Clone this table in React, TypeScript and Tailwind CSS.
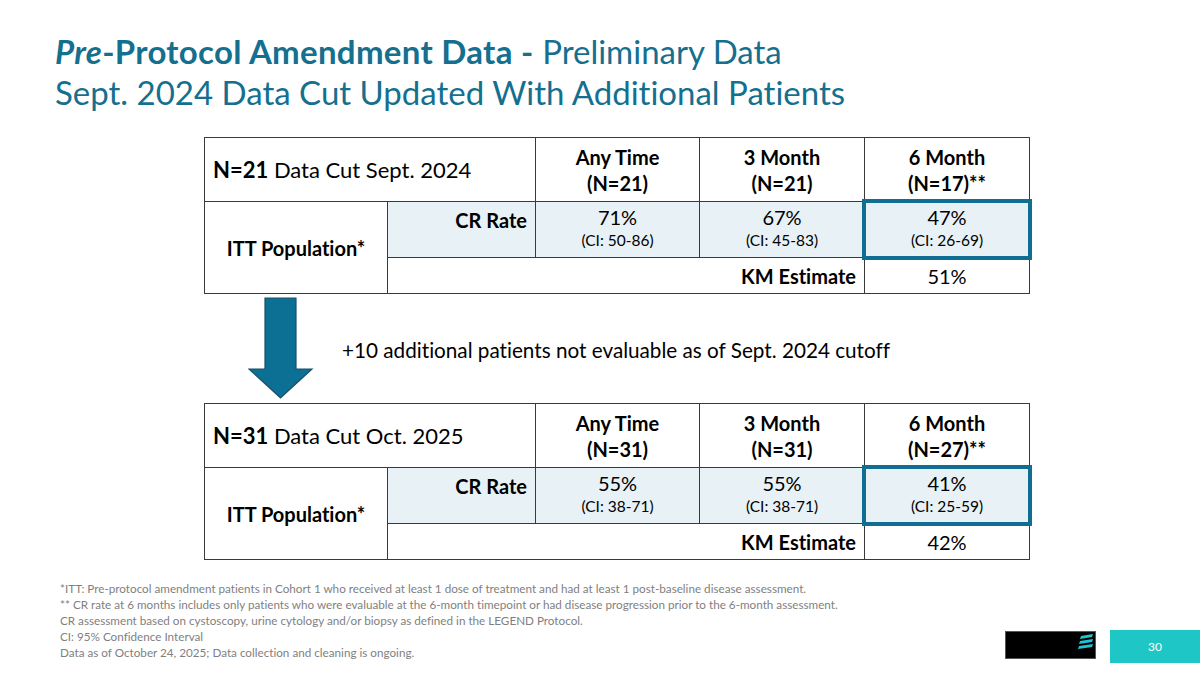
import React from "react";

const FONT = { fontFamily: "Lato, 'Open Sans', 'Noto Sans', sans-serif" };

interface CutData {
  n: string;
  label: string;
  anyN: string;
  m3N: string;
  m6N: string;
  rates: { value: string; ci: string }[];
  km: string;
}

const CUTS: CutData[] = [
  {
    n: "N=21",
    label: "Data Cut Sept. 2024",
    anyN: "(N=21)",
    m3N: "(N=21)",
    m6N: "(N=17)**",
    rates: [
      { value: "71%", ci: "(CI: 50-86)" },
      { value: "67%", ci: "(CI: 45-83)" },
      { value: "47%", ci: "(CI: 26-69)" },
    ],
    km: "51%",
  },
  {
    n: "N=31",
    label: "Data Cut Oct. 2025",
    anyN: "(N=31)",
    m3N: "(N=31)",
    m6N: "(N=27)**",
    rates: [
      { value: "55%", ci: "(CI: 38-71)" },
      { value: "55%", ci: "(CI: 38-71)" },
      { value: "41%", ci: "(CI: 25-59)" },
    ],
    km: "42%",
  },
];

const cell = "border border-[#3a3a3a]";

function CutTable({ d }: { d: CutData }) {
  return (
    <table className="ml-[204px] w-[825px] table-fixed border-collapse text-black">
      <colgroup>
        <col className="w-[183px]" />
        <col className="w-[148px]" />
        <col className="w-[164px]" />
        <col className="w-[165px]" />
        <col className="w-[165px]" />
      </colgroup>
      <tbody>
        <tr className="h-[64px]">
          <td colSpan={2} className={`${cell} pl-2 text-[22px]`}>
            <span className="font-bold">{d.n}</span> {d.label}
          </td>
          {[
            ["Any Time", d.anyN],
            ["3 Month", d.m3N],
            ["6 Month", d.m6N],
          ].map(([a, b]) => (
            <td
              key={a}
              className={`${cell} text-center text-[20px] font-bold leading-[26px]`}
            >
              {a}
              <br />
              {b}
            </td>
          ))}
        </tr>
        <tr className="h-[56px]">
          <td
            rowSpan={2}
            className={`${cell} text-center text-[20px] font-bold`}
          >
            ITT Population*
          </td>
          <td
            className={`${cell} bg-[#e8f1f6] pr-2 pt-[3px] text-right align-top text-[20px] font-bold`}
          >
            CR Rate
          </td>
          {d.rates.map((r, i) => (
            <td
              key={i}
              className={`${cell} relative bg-[#e8f1f6] pt-[3px] text-center align-top`}
            >
              <div className="text-[20px] leading-[24px]">{r.value}</div>
              <div className="text-[15.5px] leading-[22px]">{r.ci}</div>
              {i === 2 && (
                <div className="absolute -top-[3px] -left-[3px] -right-[3px] -bottom-[3px] border-[4px] border-[#0f6e92]" />
              )}
            </td>
          ))}
        </tr>
        <tr className="h-[36px]">
          <td
            colSpan={3}
            className={`${cell} pr-2 text-right text-[20px] font-bold`}
          >
            KM Estimate
          </td>
          <td className={`${cell} text-center text-[20px]`}>{d.km}</td>
        </tr>
      </tbody>
    </table>
  );
}

function DownArrow() {
  return (
    <svg width="66" height="102" viewBox="0 0 66 102" className="block">
      <path
        d="M17 1 H48 V72 H64 L32.5 101 L1 72 H17 Z"
        fill="#0c6f94"
        stroke="#1d4f66"
        strokeWidth="1.2"
      />
    </svg>
  );
}

function Logo() {
  return (
    <svg width="16" height="18" viewBox="0 0 16 18">
      <path d="M3 2 L15 0 L14 3 L2 5 Z" fill="#22c4d4" />
      <path d="M2 7 L15 5 L14 8 L1 10 Z" fill="#22c4d4" />
      <path d="M1 12 L15 10 L14 13 L0 15 Z" fill="#22c4d4" />
    </svg>
  );
}

export default function App() {
  return (
    <div
      className="relative h-[675px] w-[1200px] overflow-hidden bg-white [font-variant-ligatures:none]"
      style={FONT}
    >
      <div className="pl-[55px] pt-[31px] text-[33px] leading-[41px] text-[#156f8f]">
        <div>
          <span className="font-bold tracking-[0.3px]">
            <i>Pre</i>-Protocol Amendment Data -
          </span>{" "}
          Preliminary Data
        </div>
        <div>Sept. 2024 Data Cut Updated With Additional Patients</div>
      </div>

      <div className="mt-[24px]">
        <CutTable d={CUTS[0]} />
      </div>

      <div className="flex h-[109px] items-start">
        <div className="ml-[248px] mt-[3px]">
          <DownArrow />
        </div>
        <div className="ml-[28px] mt-[41px] text-[20.7px] text-black">
          +10 additional patients not evaluable as of Sept. 2024 cutoff
        </div>
      </div>

      <CutTable d={CUTS[1]} />

      <div className="mt-[20px] flex items-start justify-between">
        <div className="pl-[60px] text-[11.7px] leading-[16px] text-[#7f7f7f]">
          <div>
            *ITT: Pre-protocol amendment patients in Cohort 1 who received at
            least 1 dose of treatment and had at least 1 post-baseline disease
            assessment.
          </div>
          <div>
            ** CR rate at 6 months includes only patients who were evaluable at
            the 6-month timepoint or had disease progression prior to the
            6-month assessment.
          </div>
          <div>
            CR assessment based on cystoscopy, urine cytology and/or biopsy as
            defined in the LEGEND Protocol.
          </div>
          <div>CI: 95% Confidence Interval</div>
          <div>
            Data as of October 24, 2025; Data collection and cleaning is
            ongoing.
          </div>
        </div>
        <div className="mt-[51px] flex items-start">
          <div className="flex h-[28px] w-[91px] items-start justify-end border border-[#555] bg-black pr-[1px] pt-[2px]">
            <Logo />
          </div>
          <div className="ml-[14px] flex h-[33px] w-[90px] -translate-y-[1px] items-center justify-center bg-[#1fc6c6] text-[12px] text-white">
            30
          </div>
        </div>
      </div>
    </div>
  );
}
